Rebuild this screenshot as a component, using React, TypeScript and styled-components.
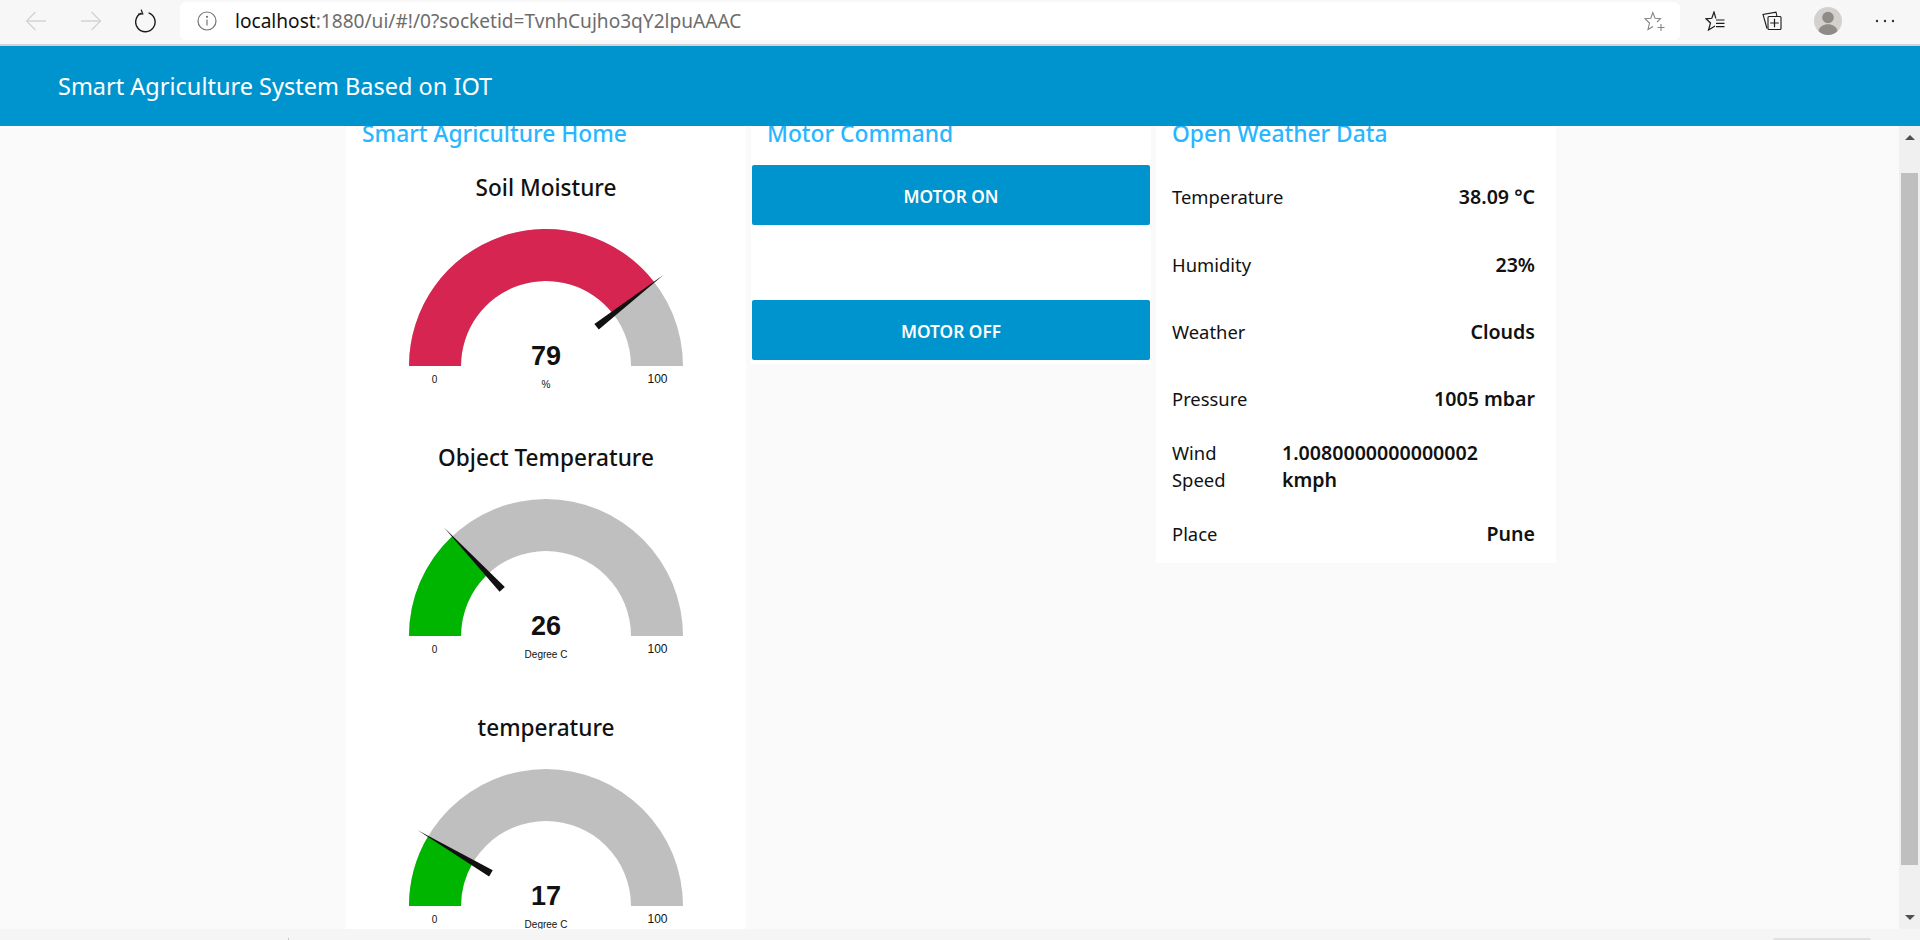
import React from "react";
import styled, { createGlobalStyle } from "styled-components";

const Global = createGlobalStyle`
  html, body { margin: 0; padding: 0; height: 100%; overflow: hidden; }
  body { font-family: "Noto Sans", "Open Sans", sans-serif; background: #fafafa; color: #111; }
`;

const Page = styled.div`
  width: 1920px;
  height: 940px;
  display: flex;
  flex-direction: column;
  overflow: hidden;
`;

const Toolbar = styled.div`
  flex: 0 0 46px;
  box-sizing: border-box;
  height: 46px;
  display: flex;
  align-items: flex-start;
  padding: 2px 0 0 8px;
  background: #f7f7f7;
  border-bottom: 2px solid #d3d3d3;
`;

const NavButton = styled.div`
  width: 55px;
  height: 37px;
  display: flex;
  align-items: center;
  justify-content: center;
`;

const AddressBar = styled.div`
  width: 1500px;
  height: 38px;
  margin-left: 7px;
  box-sizing: border-box;
  display: flex;
  align-items: center;
  padding: 0 14px 0 17px;
  background: #fff;
  border-radius: 6px;
`;

const Url = styled.div`
  margin-left: 18px;
  flex: 1;
  font-size: 19.1px;
  color: #6d6d6d;
  white-space: nowrap;
`;

const Host = styled.span`
  color: #111;
`;

const ToolButton = styled.div`
  width: 56.5px;
  height: 38px;
  display: flex;
  align-items: center;
  justify-content: center;
`;

const ToolGroup = styled.div`
  display: flex;
  margin-left: 7px;
`;

const AppHeader = styled.header`
  flex: 0 0 80px;
  display: flex;
  align-items: center;
  padding-left: 58px;
  background: #0094ce;
  color: #fff;
  font-size: 23.5px;
  position: relative;
  z-index: 2;
`;

const Viewport = styled.div`
  flex: 1;
  min-height: 0;
  display: flex;
  background: #fafafa;
`;

const Dashboard = styled.main`
  flex: 1;
  min-width: 0;
  overflow: hidden;
`;

const Columns = styled.div`
  display: flex;
  align-items: flex-start;
  gap: 5px;
  padding-left: 346px;
  margin-top: -10px;
`;

const Card = styled.section<{ $height: number }>`
  width: 400px;
  height: ${(p) => p.$height}px;
  overflow: hidden;
  background: #fff;
  flex: none;
`;

const CardTitle = styled.h2`
  margin: 0;
  padding-left: 16px;
  height: 36px;
  font-size: 22.8px;
  font-weight: 500;
  line-height: 36px;
  color: #29b6ff;
  white-space: nowrap;
`;

const GaugeList = styled.div`
  margin-top: 16px;
`;

const GaugeItem = styled.div`
  height: 270px;
`;

const GaugeTitle = styled.div`
  height: 40px;
  font-size: 22.6px;
  font-weight: 500;
  line-height: 40px;
  text-align: center;
  color: #111;
`;

const GaugeSvg = styled.svg`
  display: block;
`;

const ButtonList = styled.div`
  display: flex;
  flex-direction: column;
  gap: 75px;
  margin-top: 13px;
  padding: 0 1px;
`;

const MotorButton = styled.button`
  height: 60px;
  padding: 3px 0 0;
  border: 0;
  border-radius: 2px;
  background: #0094ce;
  color: #fff;
  font-family: inherit;
  font-size: 17.3px;
  font-weight: 600;
`;

const Rows = styled.div`
  margin-top: 11px;
  padding: 0 21px 0 16px;
  display: grid;
  grid-auto-rows: 67.4px;
`;

const Row = styled.div`
  display: flex;
  align-items: center;
  justify-content: space-between;
  font-size: 18.4px;
`;

const RowLabel = styled.div<{ $narrow?: boolean }>`
  width: ${(p) => (p.$narrow ? "109px" : "auto")};
  padding-right: ${(p) => (p.$narrow ? "40px" : "0")};
  box-sizing: border-box;
  line-height: 27px;
  color: #111;
`;

const RowValue = styled.div<{ $wrap?: boolean }>`
  flex: ${(p) => (p.$wrap ? "1" : "none")};
  max-width: ${(p) => (p.$wrap ? "230px" : "none")};
  margin-right: ${(p) => (p.$wrap ? "23px" : "0")};
  font-size: 19.6px;
  line-height: 27px;
  font-weight: 600;
  color: #111;
  overflow-wrap: anywhere;
`;

const Scrollbar = styled.div`
  flex: 0 0 21px;
  display: flex;
  flex-direction: column;
  background: #f0f0f0;
`;

const ScrollCap = styled.div<{ $height: number; $down?: boolean }>`
  height: ${(p) => p.$height}px;
  box-sizing: border-box;
  display: flex;
  justify-content: center;
  align-items: ${(p) => (p.$down ? "flex-end" : "flex-start")};
  padding: ${(p) => (p.$down ? "0 0 9px" : "9px 0 0")};
`;

const ScrollArrow = styled.div<{ $down?: boolean }>`
  width: 0;
  height: 0;
  border-left: 5px solid transparent;
  border-right: 5px solid transparent;
  border-${(p) => (p.$down ? "top" : "bottom")}: 5px solid #505050;
`;

const ScrollThumb = styled.div`
  height: 692px;
  margin: 0 2px;
  background: #bfbfbf;
`;

const BottomStrip = styled.div`
  flex: 0 0 11px;
  display: flex;
  align-items: flex-end;
  padding-left: 288px;
  background: #f5f5f5;
`;

const StripTick = styled.div`
  width: 1px;
  height: 2px;
  background: #c8c8c8;
`;

const StripPill = styled.div`
  width: 98px;
  height: 2px;
  margin-left: auto;
  margin-right: 49px;
  border-radius: 2px 2px 0 0;
  background: #e0e0e0;
`;

const Back = () => (
  <svg width="22" height="20" viewBox="0 0 22 20" fill="none" stroke="#d3d3d3" strokeWidth="1.3">
    <path d="M21 10H1.5M10.5 1L1.5 10l9 9" />
  </svg>
);
const Forward = () => (
  <svg width="22" height="20" viewBox="0 0 22 20" fill="none" stroke="#d3d3d3" strokeWidth="1.3">
    <path d="M1 10h19.5M11.5 1l9 9-9 9" />
  </svg>
);
const Refresh = () => (
  <svg width="22" height="24" viewBox="0 0 22 24" fill="none" stroke="#1c1c1c" strokeWidth="1.4">
    <path d="M13.6 3.9A9.7 9.7 0 1 1 6.4 4.2" />
    <path d="M6.2 0.6l1.5 4.3-4.6.3" strokeWidth="1.3" />
  </svg>
);
const Info = () => (
  <svg width="20" height="20" viewBox="0 0 20 20" fill="none" stroke="#757575" strokeWidth="1.2">
    <circle cx="10" cy="10" r="9" />
    <path d="M10 8.5v6" />
    <circle cx="10" cy="5.8" r=".5" fill="#757575" />
  </svg>
);
const StarAdd = () => (
  <svg width="22" height="22" viewBox="0 0 22 22" fill="none" stroke="#858585" strokeWidth="1.1">
    <path d="M9 16.500L4 19.500 5.500 13 1 8.700 6.800 8.200 8.800 2.500 11 8.200 16.500 8.700 13 12" />
    <path d="M17 14v7M13.500 17.500h7" />
  </svg>
);
const FavList = () => (
  <svg width="20" height="20" viewBox="0 0 20 20" fill="none" stroke="#1c1c1c" strokeWidth="1.2">
    <path d="M10.800 7.400L9 1 6.800 7.300 1 7.800 5.500 12 3.500 19 10 15" />
    <path d="M11 9h8.500M11 12.300h8.500M11 15.700h8.500" />
  </svg>
);
const Collections = () => (
  <svg width="20" height="20" viewBox="0 0 20 20" fill="none" stroke="#1c1c1c" strokeWidth="1.1">
    <path d="M5 17.500L1 3.500 14 1.200l1 4.300" />
    <rect x="6" y="5.500" width="13" height="13" rx="1" />
    <path d="M12.500 7.700v8.600M8.200 12h8.600" strokeWidth="1.2" />
  </svg>
);
const Avatar = () => (
  <svg width="28" height="28" viewBox="0 0 28 28">
    <circle cx="14" cy="14" r="14" fill="#d3d1cd" />
    <circle cx="14" cy="10.500" r="5.800" fill="#8f8b87" />
    <path d="M4.500 24c1-4.500 5-6.800 9.500-6.800s8.500 2.300 9.500 6.800A14 14 0 0 1 14 28a14 14 0 0 1-9.500-4z" fill="#8f8b87" />
  </svg>
);
const Dots = () => (
  <svg width="20" height="4" viewBox="0 0 20 4" fill="#333">
    <circle cx="2" cy="2" r="1.200" />
    <circle cx="10" cy="2" r="1.200" />
    <circle cx="18" cy="2" r="1.200" />
  </svg>
);

const CX = 200;
const CY = 158;
const OUTER = 137;
const INNER = 85;

const pt = (r: number, frac: number) => {
  const a = Math.PI * frac;
  return [CX - r * Math.cos(a), CY - r * Math.sin(a)] as const;
};

const sector = (from: number, to: number) => {
  const [a, b] = pt(OUTER, from);
  const [c, d] = pt(OUTER, to);
  const [e, f] = pt(INNER, to);
  const [g, h] = pt(INNER, from);
  return `M${a} ${b}A${OUTER} ${OUTER} 0 0 1 ${c} ${d}L${e} ${f}A${INNER} ${INNER} 0 0 0 ${g} ${h}Z`;
};

const needle = (frac: number) => {
  const a = Math.PI * frac;
  const [bx, by] = pt(64, frac);
  const [tx, ty] = pt(149, frac);
  const nx = Math.sin(a) * 3.6;
  const ny = -Math.cos(a) * 3.6;
  return `${bx + nx},${by + ny} ${tx},${ty} ${bx - nx},${by - ny}`;
};

type GaugeProps = { title: string; value: number; unit: string; color: string };

const Gauge = ({ title, value, unit, color }: GaugeProps) => {
  const frac = value / 100;
  return (
    <GaugeItem>
      <GaugeTitle>{title}</GaugeTitle>
      <GaugeSvg width="400" height="230" viewBox="0 0 400 230">
        <path d={sector(0, 1)} fill="#bfbfbf" />
        <path d={sector(0, frac)} fill={color} />
        <polygon points={needle(frac)} fill="#111" />
        <text x="200" y="157" textAnchor="middle" fontFamily="Liberation Sans" fontWeight="700" fontSize="27" fill="#111">
          {value}
        </text>
        <text x="200" y="180" textAnchor="middle" fontFamily="Liberation Sans" fontSize="10" fill="#111">
          {unit}
        </text>
        <text x="88.500" y="175" textAnchor="middle" fontFamily="Liberation Sans" fontSize="10" fill="#111">
          0
        </text>
        <text x="311.500" y="175" textAnchor="middle" fontFamily="Liberation Sans" fontSize="12" fill="#111">
          100
        </text>
      </GaugeSvg>
    </GaugeItem>
  );
};

const weather: [string, string][] = [
  ["Temperature", "38.09 °C"],
  ["Humidity", "23%"],
  ["Weather", "Clouds"],
  ["Pressure", "1005 mbar"],
];

export default function App() {
  return (
    <Page>
      <Global />
      <Toolbar>
        <NavButton><Back /></NavButton>
        <NavButton><Forward /></NavButton>
        <NavButton><Refresh /></NavButton>
        <AddressBar>
          <Info />
          <Url>
            <Host>localhost</Host>:1880/ui/#!/0?socketid=TvnhCujho3qY2lpuAAAC
          </Url>
          <StarAdd />
        </AddressBar>
        <ToolGroup>
          <ToolButton><FavList /></ToolButton>
          <ToolButton><Collections /></ToolButton>
          <ToolButton><Avatar /></ToolButton>
          <ToolButton><Dots /></ToolButton>
        </ToolGroup>
      </Toolbar>
      <AppHeader>Smart Agriculture System Based on IOT</AppHeader>
      <Viewport>
        <Dashboard>
          <Columns>
            <Card $height={900}>
              <CardTitle>Smart Agriculture Home</CardTitle>
              <GaugeList>
                <Gauge title="Soil Moisture" value={79} unit="%" color="#d72552" />
                <Gauge title="Object Temperature" value={26} unit="Degree C" color="#00b500" />
                <Gauge title="temperature" value={17} unit="Degree C" color="#00b500" />
              </GaugeList>
            </Card>
            <Card $height={248}>
              <CardTitle>Motor Command</CardTitle>
              <ButtonList>
                <MotorButton>MOTOR ON</MotorButton>
                <MotorButton>MOTOR OFF</MotorButton>
              </ButtonList>
            </Card>
            <Card $height={447}>
              <CardTitle>Open Weather Data</CardTitle>
              <Rows>
                {weather.map(([k, v]) => (
                  <Row key={k}>
                    <RowLabel>{k}</RowLabel>
                    <RowValue>{v}</RowValue>
                  </Row>
                ))}
                <Row>
                  <RowLabel $narrow>Wind Speed</RowLabel>
                  <RowValue $wrap>1.0080000000000002 kmph</RowValue>
                </Row>
                <Row>
                  <RowLabel>Place</RowLabel>
                  <RowValue>Pune</RowValue>
                </Row>
              </Rows>
            </Card>
          </Columns>
        </Dashboard>
        <Scrollbar>
          <ScrollCap $height={47}><ScrollArrow /></ScrollCap>
          <ScrollThumb />
          <ScrollCap $height={64} $down><ScrollArrow $down /></ScrollCap>
        </Scrollbar>
      </Viewport>
      <BottomStrip>
        <StripTick />
        <StripPill />
      </BottomStrip>
    </Page>
  );
}
